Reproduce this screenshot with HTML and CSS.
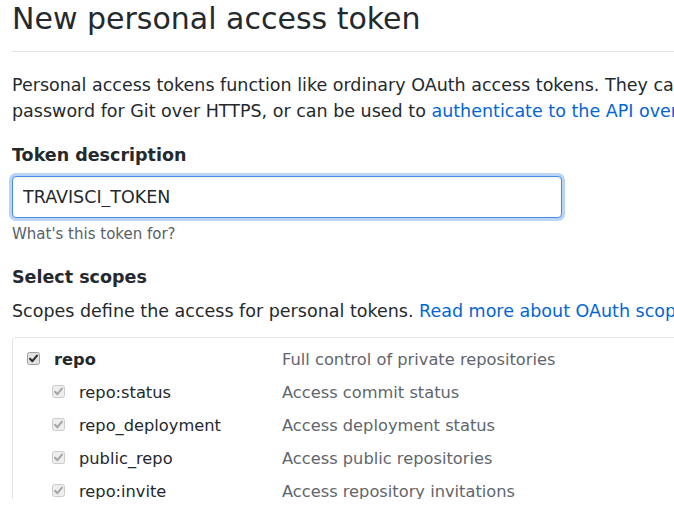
FILE: index.html
```html
<!DOCTYPE html>
<html lang="en">
<head>
<meta charset="utf-8">
<title>New personal access token</title>
<link rel="stylesheet" href="styles.css">
</head>
<body>
<div class="page">
  <div class="subhead">
    <h2 class="subhead-heading">New personal access token</h2>
  </div>
  <p class="intro">Personal access tokens function like ordinary OAuth access tokens. They can be used instead of a<br>password for Git over HTTPS, or can be used to <a href="#">authenticate to the API over Basic Authentication</a>.</p>

  <dl class="form-group first">
    <dt><label for="desc">Token description</label></dt>
    <dd>
      <input id="desc" class="form-control focus" type="text" value="TRAVISCI_TOKEN">
      <p class="note">What's this token for?</p>
    </dd>
  </dl>

  <dl class="form-group">
    <dt><label>Select scopes</label></dt>
    <dd>
      <p class="scopes-intro">Scopes define the access for personal tokens. <a href="#">Read more about OAuth scopes.</a></p>
      <div class="scope-box">
        <div class="scope-row">
          <div class="scope-name">
            <span class="cb"><svg viewBox="0 0 13 13" width="13" height="13"><rect x="0.5" y="0.5" width="12" height="12" rx="2" fill="#e2e2e2" stroke="#9d9d9d"/><path d="M3 6.8 L5.4 9.2 L10 3.6" fill="none" stroke="#2b2b2b" stroke-width="2" stroke-linecap="round" stroke-linejoin="round"/></svg></span>
            <strong>repo</strong>
          </div>
          <div class="scope-desc">Full control of private repositories</div>
        </div>
        <div class="scope-row sub">
          <div class="scope-name">
            <span class="cb"><svg viewBox="0 0 13 13" width="13" height="13"><rect x="0.5" y="0.5" width="12" height="12" rx="2" fill="#eeeeee" stroke="#cbcbcb"/><path d="M3 6.8 L5.4 9.2 L10 3.6" fill="none" stroke="#a6a6a6" stroke-width="2" stroke-linecap="round" stroke-linejoin="round"/></svg></span>
            repo:status
          </div>
          <div class="scope-desc">Access commit status</div>
        </div>
        <div class="scope-row sub">
          <div class="scope-name">
            <span class="cb"><svg viewBox="0 0 13 13" width="13" height="13"><rect x="0.5" y="0.5" width="12" height="12" rx="2" fill="#eeeeee" stroke="#cbcbcb"/><path d="M3 6.8 L5.4 9.2 L10 3.6" fill="none" stroke="#a6a6a6" stroke-width="2" stroke-linecap="round" stroke-linejoin="round"/></svg></span>
            repo_deployment
          </div>
          <div class="scope-desc">Access deployment status</div>
        </div>
        <div class="scope-row sub">
          <div class="scope-name">
            <span class="cb"><svg viewBox="0 0 13 13" width="13" height="13"><rect x="0.5" y="0.5" width="12" height="12" rx="2" fill="#eeeeee" stroke="#cbcbcb"/><path d="M3 6.8 L5.4 9.2 L10 3.6" fill="none" stroke="#a6a6a6" stroke-width="2" stroke-linecap="round" stroke-linejoin="round"/></svg></span>
            public_repo
          </div>
          <div class="scope-desc">Access public repositories</div>
        </div>
        <div class="scope-row sub">
          <div class="scope-name">
            <span class="cb"><svg viewBox="0 0 13 13" width="13" height="13"><rect x="0.5" y="0.5" width="12" height="12" rx="2" fill="#eeeeee" stroke="#cbcbcb"/><path d="M3 6.8 L5.4 9.2 L10 3.6" fill="none" stroke="#a6a6a6" stroke-width="2" stroke-linecap="round" stroke-linejoin="round"/></svg></span>
            repo:invite
          </div>
          <div class="scope-desc">Access repository invitations</div>
        </div>
        <div class="scope-row sub">
          <div class="scope-name">
            <span class="cb"><svg viewBox="0 0 13 13" width="13" height="13"><rect x="0.5" y="0.5" width="12" height="12" rx="2" fill="#eeeeee" stroke="#cbcbcb"/><path d="M3 6.8 L5.4 9.2 L10 3.6" fill="none" stroke="#a6a6a6" stroke-width="2" stroke-linecap="round" stroke-linejoin="round"/></svg></span>
            security_events
          </div>
          <div class="scope-desc">Read and write security events</div>
        </div>
      </div>
    </dd>
  </dl>
</div>
</body>
</html>
```

FILE: styles.css
```css
html, body {
  margin: 0;
  padding: 0;
  background: #fff;
  overflow: hidden;
}

body {
  font-family: "DejaVu Sans", "Liberation Sans", sans-serif;
  font-size: 17.5px;
  line-height: 26.25px;
  color: #24292e;
}

a {
  color: #0366d6;
  text-decoration: none;
}

.page {
  width: 1000px;
  height: 499px;
  overflow: hidden;
  padding-left: 12px;
  box-sizing: border-box;
}

.subhead {
  border-bottom: 1px solid #e1e4e8;
  padding-bottom: 13.5px;
}

.subhead-heading {
  margin: 0;
  font-size: 30px;
  font-weight: 400;
  line-height: 37.5px;
}

.intro {
  margin: 20px 0 0;
  white-space: nowrap;
}

.form-group {
  margin: 18.5px 0 0;
}

.form-group.first {
  margin-top: 17.3px;
}

.form-group dt {
  margin: 0 0 7.5px;
}

.form-group dt label {
  font-weight: 700;
}

.form-group dd {
  margin: 0;
}

.form-control {
  display: block;
  box-sizing: border-box;
  width: 550px;
  height: 42.5px;
  margin: 0;
  padding: 7.5px 10px;
  font-family: inherit;
  font-size: 17.5px;
  line-height: 25px;
  color: #24292e;
  background: #fff;
  border: 1px solid #2188ff;
  border-radius: 4px;
  outline: none;
}

.form-control.focus {
  border-color: #4a8fde;
  box-shadow: inset 0 1px 2px rgba(27, 31, 35, 0.075), 0 0 0 3px rgba(3, 102, 214, 0.28);
}

.note {
  margin: 5px 0 0;
  font-size: 15px;
  line-height: 22.5px;
  color: #586069;
}

.scopes-intro {
  margin: 0;
  white-space: nowrap;
}

.scope-box {
  margin-top: 12.5px;
  border: 1px solid #e1e4e8;
  border-radius: 4px;
  padding: 5.8px 0 10px 14px;
  font-size: 16.25px;
}

.scope-row {
  display: grid;
  grid-template-columns: 255px 1fr;
  line-height: 33px;
}

.scope-name {
  display: flex;
  align-items: baseline;
  white-space: nowrap;
}

.scope-row.sub .scope-name {
  padding-left: 25px;
}

.cb {
  display: inline-block;
  width: 13px;
  height: 13px;
  margin: 0 14px 3px 0;
  flex: none;
}

.scope-row.sub .cb {
  margin-bottom: 4px;
  margin-right: 14px;
}

.cb svg {
  display: block;
}

.scope-desc {
  color: #5f666d;
  white-space: nowrap;
}
```
